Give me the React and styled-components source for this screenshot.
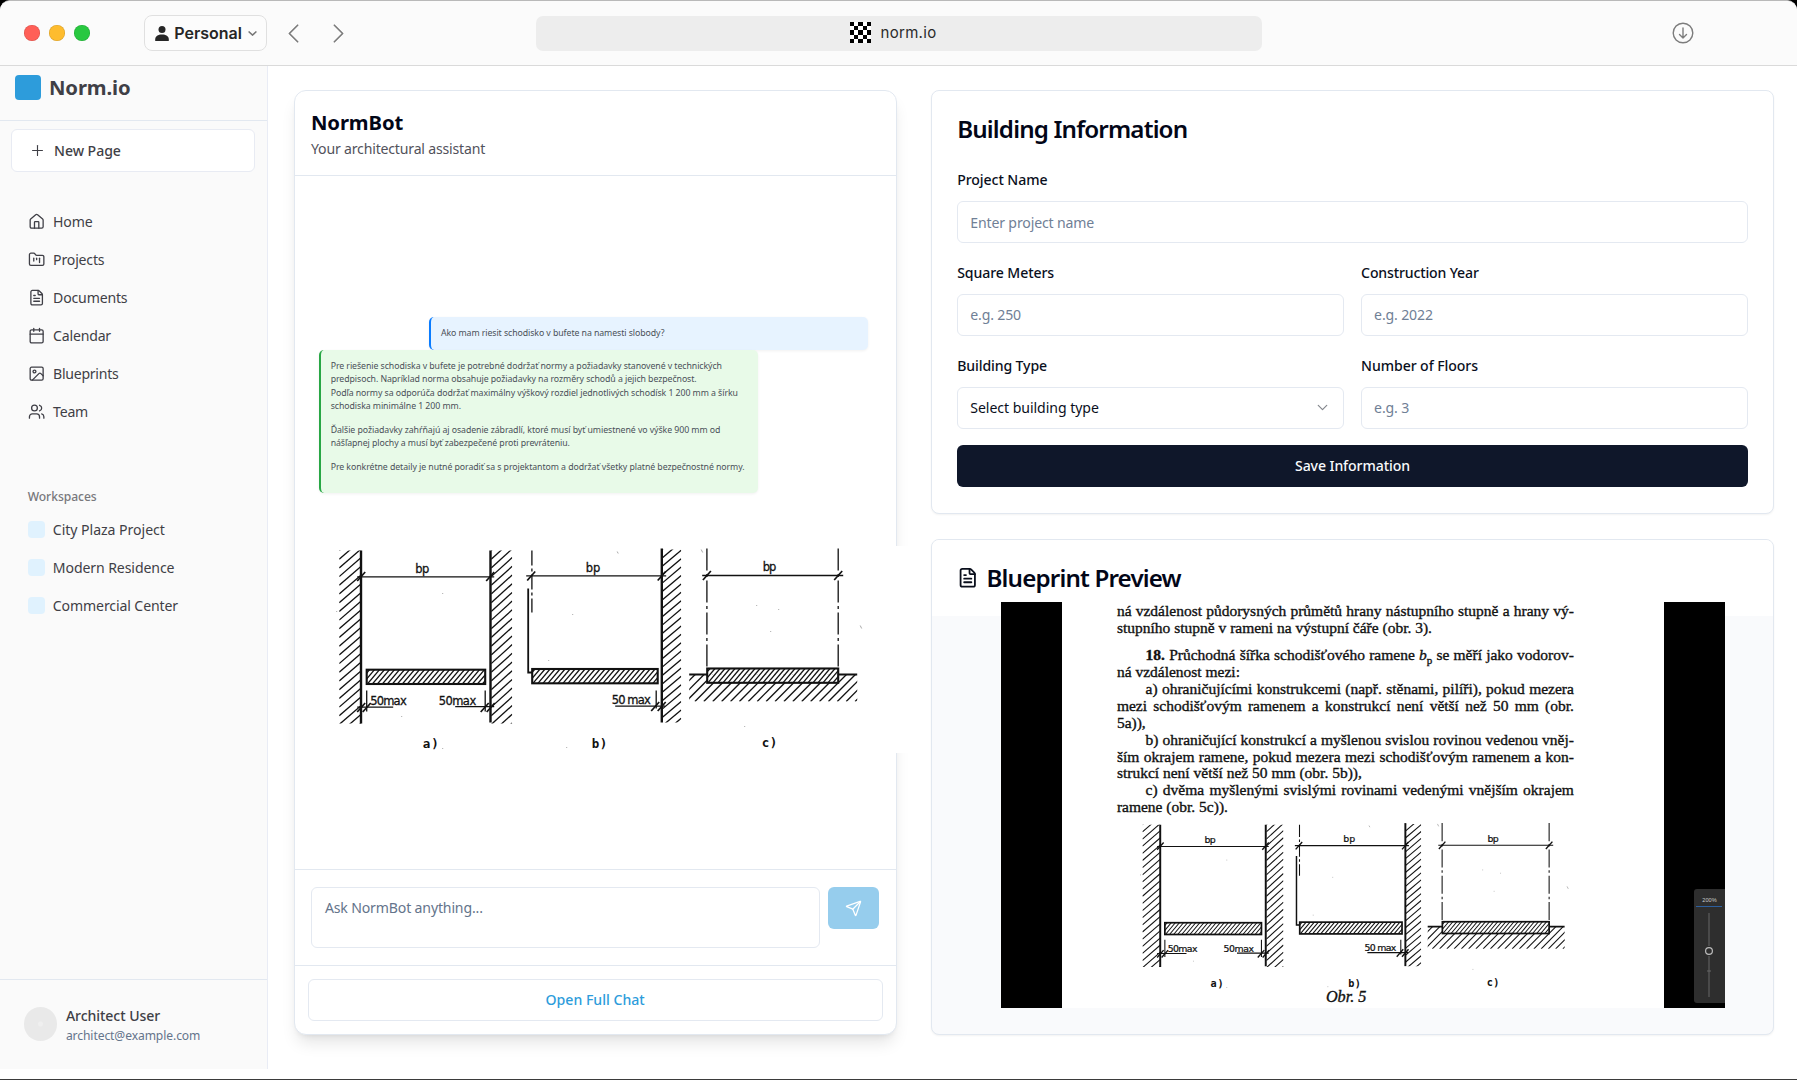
import React from "react";
import styled, { createGlobalStyle, css } from "styled-components";
import {
  House, FolderKanban, FileText, Calendar, Image, Users, Plus, Send,
  ChevronDown, ChevronLeft, ChevronRight,
} from "lucide-react";

const Global = createGlobalStyle`
  * { box-sizing: border-box; }
  body { margin: 0; background: #000; overflow: hidden; }
  button, input, textarea { font: inherit; color: inherit; }
`;

const line = "#e2e8f0";
const sans = css`font-family: "Noto Sans", "Open Sans", sans-serif;`;

const Window = styled.div`
  ${sans}
  width: 1797px;
  height: 1080px;
  display: flex;
  flex-direction: column;
  background: #fff;
  border-top: 1px solid #b9b9b9;
  border-bottom: 1px solid #3b3b3b;
  border-radius: 10px 10px 0 0;
  font-size: 14.1px;
  color: #0a0f1c;
  overflow: hidden;
`;

const Text = styled.span`
  letter-spacing: ${(p) => p.$ls || 0}px;
  white-space: nowrap;
`;

/* Browser toolbar */
const Toolbar = styled.header`
  height: 65px;
  flex: none;
  display: flex;
  align-items: center;
  background: #fbfbfb;
  border-bottom: 1px solid #dadada;
  font-family: Inter, sans-serif;
`;
const Lights = styled.div`
  display: flex;
  gap: 9.4px;
  margin-left: 24px;
`;
const Light = styled.i`
  width: 15.6px;
  height: 15.6px;
  border-radius: 50%;
  background: ${(p) => p.$color};
  box-shadow: inset 0 0 0 0.6px rgba(0, 0, 0, 0.14);
`;
const Profile = styled.button`
  width: 123px;
  height: 36px;
  margin-left: 54.2px;
  padding: 0 8px 0 10px;
  display: flex;
  align-items: center;
  border: 1px solid #e0e0e0;
  border-radius: 8px;
  background: #fcfcfc;
  font-size: 16px;
  font-weight: 600;
  color: #262626;
  svg { flex: none; }
  span { margin: 0 6.5px 0 5.5px; }
`;
const Arrows = styled.div`
  display: flex;
  gap: 12px;
  margin-left: 10.5px;
  color: #7b7b7b;
`;
const Address = styled.div`
  width: 726.5px;
  height: 35px;
  margin-left: 180.5px;
  padding: 0 12px 1.5px 0;
  display: flex;
  align-items: center;
  justify-content: center;
  gap: 10px;
  border-radius: 7px;
  background: #ededed;
  color: #2a2a2a;
  font-size: 15px;
`;
const Download = styled.svg`
  width: 22px;
  height: 22px;
  margin: 0 0 1px 410px;
  fill: none;
  stroke: #7d7d7d;
  stroke-width: 1.4;
  stroke-linecap: round;
  stroke-linejoin: round;
`;

/* Sidebar */
const Body = styled.div`
  flex: 1;
  display: flex;
  min-height: 0;
`;
const Sidebar = styled.aside`
  width: 268.4px;
  height: 1003px;
  flex: none;
  display: flex;
  flex-direction: column;
  background: #fafafa;
  border-right: 1px solid #e9ecf5;
  color: #3f3f46;
`;
const Brand = styled.div`
  height: 55px;
  padding: 8.6px 0 0 15px;
  display: flex;
  gap: 8.5px;
  border-bottom: 1px solid ${line};
  font-size: 20.3px;
  font-weight: 700;
  line-height: 25px;
`;
const Logo = styled.i`
  width: 25.5px;
  height: 25.5px;
  border-radius: 4px;
  background: #2d9cdb;
`;
const NewPage = styled.button`
  height: 42.5px;
  margin: 8px 12px 0 11px;
  padding: 0 0 0 17px;
  display: flex;
  align-items: center;
  gap: 8px;
  border: 1px solid #e8ebf3;
  border-radius: 6px;
  background: #fff;
  font-weight: 500;
`;
const Nav = styled.nav`
  margin-top: ${(p) => p.$top}px;
  display: flex;
  flex-direction: column;
`;
const NavItem = styled.a`
  height: 38px;
  padding-left: 27.7px;
  display: flex;
  align-items: center;
  gap: 8.1px;
`;
const Swatch = styled.i`
  width: 17px;
  height: 17px;
  border-radius: 4px;
  background: #e0f2fe;
`;
const NavLabel = styled.div`
  margin: 57px 0 0 27.7px;
  line-height: 18px;
  font-size: 12.1px;
  font-weight: 500;
  color: #78787c;
`;
const User = styled.footer`
  height: 90px;
  margin-top: auto;
  padding: 25px 0 0 23.5px;
  display: flex;
  gap: 8.9px;
  border-top: 1px solid ${line};
`;
const Avatar = styled.i`
  width: 33.5px;
  height: 33.5px;
  margin-top: 2px;
  border-radius: 50%;
  background: radial-gradient(circle, #efefef 0 2px, #e9e9e9 3px);
`;
const UserText = styled.div`
  display: flex;
  flex-direction: column;
  line-height: 22px;
  font-weight: 500;
  small {
    line-height: 17px;
    font-size: 12.1px;
    font-weight: 400;
    color: #64748b;
  }
`;

/* Main columns */
const Main = styled.main`
  flex: 1;
  padding: 24px 23.3px 0 26px;
  display: grid;
  grid-template-columns: 602.5px 842.5px;
  justify-content: space-between;
  align-items: start;
`;
const Chat = styled.section`
  height: 944.6px;
  display: flex;
  flex-direction: column;
  border: 1px solid ${line};
  border-radius: 12px;
  background: #fff;
  box-shadow: 0 11px 16px -3px rgba(0, 0, 0, 0.1), 0 4px 6px -4px rgba(0, 0, 0, 0.1);
`;
const ChatHeader = styled.div`
  height: 84.5px;
  padding: 17px 0 0 15.6px;
  border-bottom: 1px solid ${line};
  h2 {
    margin: 0;
    font-size: 20.3px;
    line-height: 28px;
    color: #020617;
  }
  p {
    margin: 1.5px 0 0;
    line-height: 21px;
    color: #52525b;
  }
`;
const Messages = styled.div`
  flex: 1;
  padding-top: 141px;
  font-size: 8.75px;
  line-height: 13.6px;
  color: #4a5058;
`;
const Bubble = styled.div`
  width: ${(p) => (p.$user ? 439.5 : 439)}px;
  height: ${(p) => (p.$user ? 33.3 : 143.4)}px;
  margin-left: ${(p) => (p.$user ? 133.6 : 23.4)}px;
  padding: ${(p) => (p.$user ? 10.8 : 9.9)}px 0 0 9.9px;
  border-left: 2.6px solid ${(p) => (p.$user ? "#0a7cff" : "#28a745")};
  border-radius: 5px;
  background: ${(p) => (p.$user ? "#e7f3ff" : "#e8fae8")};
  box-shadow: 0 1px 3px rgba(0, 0, 0, 0.06);
`;
const Paragraph = styled.div`
  display: flex;
  flex-direction: column;
  margin-bottom: 9.8px;
`;
const ChatFigure = styled.svg`
  position: relative;
  display: block;
  width: 592px;
  height: 206.5px;
  margin: 53px 0 0 23.2px;
  background: #fff;
`;
const Composer = styled.div`
  height: 96px;
  padding: 17px 16px;
  display: flex;
  align-items: flex-start;
  gap: 8.6px;
  border-top: 1px solid ${line};
`;
const Prompt = styled.div`
  width: 508.5px;
  height: 61px;
  padding: 8.4px 12.5px;
  border: 1px solid #e4e9f1;
  border-radius: 6px;
  line-height: 23px;
  color: #64748b;
`;
const SendButton = styled.button`
  width: 51px;
  height: 42.5px;
  padding: 0;
  display: flex;
  align-items: center;
  justify-content: center;
  border: 0;
  border-radius: 6px;
  background: #96cded;
  color: #fff;
`;
const ChatFooter = styled.div`
  padding: 13px 12.5px 12.3px;
  border-top: 1px solid ${line};
`;
const OpenChat = styled.button`
  width: 100%;
  height: 42.5px;
  padding: 0 1px 1px 0;
  border: 1px solid #e4e9f1;
  border-radius: 6px;
  background: #fff;
  font-weight: 500;
  color: #2d9cdb;
`;

/* Right column */
const Column = styled.div`
  display: flex;
  flex-direction: column;
  gap: 25.6px;
`;
const Card = styled.section`
  height: ${(p) => p.$h}px;
  border: 1px solid ${line};
  border-radius: 8px;
  background: ${(p) => p.$bg || "#fff"};
  box-shadow: 0 1px 2px rgba(0, 0, 0, 0.05);
`;
const Title = styled.h1`
  margin: 0;
  font-size: 24.2px;
  font-weight: 560;
  line-height: 34px;
  color: #020617;
`;
const Form = styled.form`
  padding: 21.2px 25px 0;
  display: flex;
  flex-direction: column;
`;
const FormGrid = styled.div`
  margin-top: 22.9px;
  display: grid;
  grid-template-columns: 1fr 1fr;
  column-gap: 17.3px;
  row-gap: 18.9px;
`;
const Field = styled.label`
  grid-column: ${(p) => (p.$wide ? "span 2" : "auto")};
  height: 74px;
  display: flex;
  flex-direction: column;
  justify-content: space-between;
  line-height: 21px;
  font-weight: 540;
`;
const Control = styled.div`
  height: 42px;
  padding: 0 12px;
  display: flex;
  align-items: center;
  justify-content: space-between;
  border: 1px solid #e4e9f1;
  border-radius: 6px;
  font-weight: 400;
  color: ${(p) => (p.$filled ? "#0a0f1c" : "#708096")};
  svg { color: #84878d; }
`;
const Save = styled.button`
  height: 42px;
  margin-top: 16.6px;
  padding: 0 0 1px;
  border: 0;
  border-radius: 6px;
  background: #0f172a;
  color: #f8fafc;
  font-weight: 500;
`;
const PreviewHeader = styled.div`
  height: 76px;
  padding: 21.4px 0 0 25px;
  display: flex;
  gap: 7.8px;
  border-radius: 7px 7px 0 0;
  background: #fff;
  svg { margin-top: 5.4px; }
`;
const Scan = styled.div`
  position: relative;
  width: 724.5px;
  height: 406.5px;
  margin: -14.4px 0 0 68.5px;
  display: flex;
  background: #000;
`;
const Margin = styled.div`
  width: 61.2px;
  display: flex;
  flex-direction: column;
  align-items: flex-end;
  justify-content: flex-end;
  padding-bottom: 5px;
`;
const Paper = styled.div`
  flex: 1;
  padding-top: 1.2px;
  background: #fff;
  font-family: "Liberation Serif", "Times New Roman", serif;
  font-size: 15.5px;
  line-height: 16.9px;
  color: #111;
  -webkit-text-stroke: 0.35px #111;
`;
const ScanLine = styled.div`
  width: 457px;
  margin: ${(p) => p.$gap || 0}px 0 0 55px;
  padding-left: ${(p) => (p.$indent ? 28.7 : 0)}px;
  white-space: nowrap;
  text-align-last: ${(p) => (p.$short ? "left" : "justify")};
  sub { font-size: 11px; line-height: 0; }
`;
const ScanFigure = styled.svg`
  display: block;
  width: 100%;
  height: 169.3px;
  margin-top: 3px;
  overflow: visible;
  -webkit-text-stroke: 0;
`;
const ScanCaption = styled.div`
  padding: 1.6px 0 0 264px;
  line-height: 15px;
  font-size: 16.2px;
  font-style: italic;
`;
const ZoomPanel = styled.div`
  width: 31.5px;
  height: 114px;
  padding-top: 7px;
  display: flex;
  flex-direction: column;
  align-items: center;
  border-radius: 3px 0 0 3px;
  background: #2e2e2e;
  color: #c9c9c9;
  font-family: "Liberation Sans", sans-serif;
  font-size: 5.6px;
  line-height: 8px;
`;

/* Section drawing */
const Ink = styled.g`
  stroke: #111;
  stroke-width: 1.3;
  fill: none;
  text {
    fill: #111;
    stroke: #111;
    stroke-width: 0.3;
    font-family: "DejaVu Sans", sans-serif;
    font-size: 11.5px;
  }
  .tag {
    font-family: "DejaVu Sans Mono", monospace;
    font-weight: 700;
    font-size: 12.5px;
    stroke-width: 0;
  }
`;

function Hatch({ x, y, w, h, step, rise }) {
  const lines = [];
  for (let s = 0; s < h + rise + step; s += step) lines.push(s);
  return (
    <svg x={x} y={y} width={w} height={h}>
      {lines.map((s) => (
        <line key={s} x1={0} y1={s} x2={w} y2={s - rise} />
      ))}
    </svg>
  );
}

function Slab({ x, y, w, h = 14.3 }) {
  const lines = [];
  for (let s = -h; s < w; s += 5) lines.push(s);
  return (
    <>
      <svg x={x} y={y} width={w} height={h}>
        {lines.map((s) => (
          <line key={s} x1={s} y1={h} x2={s + h * 0.85} y2={0} strokeWidth="1.3" />
        ))}
      </svg>
      <rect x={x} y={y} width={w} height={h} strokeWidth="2.1" />
    </>
  );
}

function Ground() {
  const lines = [];
  for (let s = 668; s < 860; s += 8.9) lines.push(s);
  return (
    <svg x="689" y="676" width="168" height="27" viewBox="689 676 168 27">
      {lines.map((s) => (
        <line key={s} x1={s} y1={703} x2={s + 27} y2={676} />
      ))}
      <rect x="707" y="670" width="131" height="14.3" fill="#fff" stroke="none" />
    </svg>
  );
}

const Tick = ({ x, y }) => <path strokeWidth="1.7" d={`M${x - 4} ${y + 4.5}l8-9`} />;

function SectionDrawing() {
  return (
    <Ink>
      <Hatch x={339} y={552} w={22} h={173} step={8.7} rise={19} />
      <Hatch x={491} y={552} w={21} h={173} step={8.7} rise={19} />
      <path strokeWidth="2.4" d="M360.8 552V725M490.3 552V724" />
      <path d="M357 578.4H494" />
      <Tick x={361} y={578} /><Tick x={490} y={578} />
      <text x="415" y="574" textLength="14">bp</text>
      <Slab x={366.5} y={671.2} w={118.5} />
      <path d="M366.5 692V713M485 692V713M357 708.6H393M455 708.2H494" />
      <Tick x={361} y={709} /><Tick x={366.5} y={709} /><Tick x={484.5} y={709} /><Tick x={490.5} y={709} />
      <text x="370" y="706.5" textLength="36.5">50max</text>
      <text x="438.5" y="706.5" textLength="37.5">50max</text>
      <text className="tag" x="422.5" y="749.5" textLength="16">a)</text>

      <path strokeDasharray="15 3 3 3" d="M531.7 552V614" />
      <path strokeWidth="1.8" d="M528 590V674H532" />
      <path d="M526 577.4H666" />
      <Tick x={531} y={577.5} /><Tick x={661.5} y={577.5} />
      <text x="585.5" y="573.5" textLength="14.5">bp</text>
      <Slab x={532} y={670.5} w={125.5} />
      <Hatch x={662} y={551} w={19} h={173} step={8.4} rise={16} />
      <path strokeWidth="2.4" d="M661.6 550V724" />
      <path d="M656 692V710M615 707.6H665" />
      <Tick x={655} y={708} /><Tick x={661.5} y={708} />
      <text x="611.5" y="705" textLength="39">50 max</text>
      <text className="tag" x="591.5" y="749" textLength="15.5">b)</text>

      <path strokeDasharray="22 3.5 3 3.5" d="M706.7 550V670M838 550V670" />
      <path d="M702 577H843" />
      <Tick x={706.7} y={577} /><Tick x={838} y={577} />
      <text x="762.5" y="572.5" textLength="13.5">bp</text>
      <Ground />
      <Slab x={707} y={670} w={131} />
      <path strokeWidth="2" d="M689 676H707M838 676H857" />
      <text className="tag" x="761.5" y="748.5" textLength="15.5">c)</text>

      <path stroke="#aaa" strokeWidth="1" d="M336 613h1M442 595h1M401 718h1M442 750h1M566 749h1M617 553l1 2M701 551l1.5 3M744 728h1M860 627l1.5 3M770 633h1M756 607h1M778 611h1M548 662h1M572 616h1" />
    </Ink>
  );
}

const navItems = [
  [House, "Home", -0.2], [FolderKanban, "Projects", -0.18], [FileText, "Documents", -0.18],
  [Calendar, "Calendar", -0.2], [Image, "Blueprints", -0.28], [Users, "Team", -0.25],
];
const workspaces = [["City Plaza Project", -0.04], ["Modern Residence", -0.1], ["Commercial Center", -0.12]];
const answer = [
  [
    "Pre riešenie schodiska v bufete je potrebné dodržať normy a požiadavky stanovené v technických",
    "predpisoch. Napríklad norma obsahuje požiadavky na rozměry schodů a jejich bezpečnost.",
    "Podľa normy sa odporúča dodržať maximálny výškový rozdiel jednotlivých schodísk 1 200 mm a šírku",
    "schodiska minimálne 1 200 mm.",
  ],
  [
    "Ďalšie požiadavky zahŕňajú aj osadenie zábradlí, ktoré musí byť umiestnené vo výške 900 mm od",
    "nášľapnej plochy a musí byť zabezpečené proti prevráteniu.",
  ],
  ["Pre konkrétne detaily je nutné poradiť sa s projektantom a dodržať všetky platné bezpečnostné normy."],
];

function Checker() {
  const cells = [];
  for (let r = 0; r < 5; r++)
    for (let c = 0; c < 5; c++)
      if ((r + c) % 2 === 0) cells.push(<rect key={`${r}${c}`} x={c * 4.2} y={r * 4.2} width="4.2" height="4.2" />);
  return (
    <svg width="21" height="21" shapeRendering="crispEdges">
      <rect width="21" height="21" fill="#fff" />
      {cells}
    </svg>
  );
}

export default function App() {
  return (
    <>
      <Global />
      <Window>
        <Toolbar>
          <Lights>
            <Light $color="#ff5f57" /><Light $color="#febc2e" /><Light $color="#28c840" />
          </Lights>
          <Profile>
            <svg width="14" height="15" viewBox="0 0 14 15" fill="#262626">
              <circle cx="7" cy="3.6" r="3.5" />
              <path d="M0.2 15v-1.6C0.2 10.4 3 8.6 7 8.6s6.8 1.8 6.8 4.8V15z" />
            </svg>
            <Text>Personal</Text>
            <svg width="9" height="5" viewBox="0 0 9 5" fill="none" stroke="#777" strokeWidth="1.5"><path d="M.6.5l3.9 3.6L8.4.5" /></svg>
          </Profile>
          <Arrows>
            <ChevronLeft size={33} strokeWidth={1.25} />
            <ChevronRight size={33} strokeWidth={1.25} />
          </Arrows>
          <Address><Checker /><Text $ls={0.3}>norm.io</Text></Address>
          <Download viewBox="0 0 22 22">
            <circle cx="11" cy="11" r="9.8" />
            <path d="M11 6v10M7.5 12.5L11 16l3.5-3.5" />
          </Download>
        </Toolbar>
        <Body>
          <Sidebar>
            <Brand><Logo /><Text $ls={-0.12}>Norm.io</Text></Brand>
            <NewPage><Plus size={17} strokeWidth={1.6} /><Text $ls={-0.05}>New Page</Text></NewPage>
            <Nav $top={31}>
              {navItems.map(([Icon, label, ls]) => (
                <NavItem key={label}><Icon size={17.3} strokeWidth={1.8} /><Text $ls={ls}>{label}</Text></NavItem>
              ))}
            </Nav>
            <NavLabel><Text $ls={-0.05}>Workspaces</Text></NavLabel>
            <Nav $top={5}>
              {workspaces.map(([label, ls]) => (
                <NavItem key={label}><Swatch /><Text $ls={ls}>{label}</Text></NavItem>
              ))}
            </Nav>
            <User>
              <Avatar />
              <UserText>
                <Text $ls={-0.07}>Architect User</Text>
                <small><Text $ls={-0.09}>architect@example.com</Text></small>
              </UserText>
            </User>
          </Sidebar>
          <Main>
            <Chat>
              <ChatHeader>
                <h2><Text $ls={-0.12}>NormBot</Text></h2>
                <p><Text $ls={-0.19}>Your architectural assistant</Text></p>
              </ChatHeader>
              <Messages>
                <Bubble $user><Text $ls={-0.07}>Ako mam riesit schodisko v bufete na namesti slobody?</Text></Bubble>
                <Bubble>
                  {answer.map((lines, i) => (
                    <Paragraph key={i}>
                      {lines.map((t) => <Text key={t} $ls={-0.065}>{t}</Text>)}
                    </Paragraph>
                  ))}
                </Bubble>
                <ChatFigure viewBox="318.8 547.5 592 206.5"><SectionDrawing /></ChatFigure>
              </Messages>
              <Composer>
                <Prompt><Text $ls={-0.16}>Ask NormBot anything...</Text></Prompt>
                <SendButton><Send size={17} strokeWidth={1.8} /></SendButton>
              </Composer>
              <ChatFooter><OpenChat><Text>Open Full Chat</Text></OpenChat></ChatFooter>
            </Chat>
            <Column>
              <Card $h={423.5}>
                <Form>
                  <Title><Text $ls={-0.85}>Building Information</Text></Title>
                  <FormGrid>
                    <Field $wide><Text $ls={-0.08}>Project Name</Text><Control><Text $ls={-0.15}>Enter project name</Text></Control></Field>
                    <Field><Text $ls={-0.1}>Square Meters</Text><Control><Text $ls={-0.15}>e.g. 250</Text></Control></Field>
                    <Field><Text $ls={-0.16}>Construction Year</Text><Control><Text $ls={-0.15}>e.g. 2022</Text></Control></Field>
                    <Field><Text $ls={-0.12}>Building Type</Text><Control $filled><Text $ls={-0.05}>Select building type</Text><ChevronDown size={17} strokeWidth={1.7} /></Control></Field>
                    <Field><Text $ls={-0.08}>Number of Floors</Text><Control><Text $ls={-0.15}>e.g. 3</Text></Control></Field>
                  </FormGrid>
                  <Save type="button"><Text $ls={-0.1}>Save Information</Text></Save>
                </Form>
              </Card>
              <Card $h={496} $bg="#f9fafc">
                <PreviewHeader>
                  <FileText size={21.5} strokeWidth={2} />
                  <Title><Text $ls={-0.85}>Blueprint Preview</Text></Title>
                </PreviewHeader>
                <Scan>
                  <Margin />
                  <Paper>
                    <ScanLine>ná vzdálenost půdorysných průmětů hrany nástupního stupně a hrany vý-</ScanLine>
                    <ScanLine $short>stupního stupně v rameni na výstupní čáře (obr. 3).</ScanLine>
                    <ScanLine $gap={10.4} $indent><b>18.</b> Průchodná šířka schodišťového ramene <i>b</i><sub>p</sub> se měří jako vodorov-</ScanLine>
                    <ScanLine $short>ná vzdálenost mezi:</ScanLine>
                    <ScanLine $indent>a) ohraničujícími konstrukcemi (např. stěnami, pilíři), pokud mezera</ScanLine>
                    <ScanLine>mezi schodišťovým ramenem a konstrukcí není větší než 50 mm (obr.</ScanLine>
                    <ScanLine $short>5a)),</ScanLine>
                    <ScanLine $indent>b) ohraničující konstrukcí a myšlenou svislou rovinou vedenou vněj-</ScanLine>
                    <ScanLine>ším okrajem ramene, pokud mezera mezi schodišťovým ramenem a kon-</ScanLine>
                    <ScanLine $short>strukcí není větší než 50 mm (obr. 5b)),</ScanLine>
                    <ScanLine $indent>c) dvěma myšlenými svislými rovinami vedenými vnějším okrajem</ScanLine>
                    <ScanLine $short>ramene (obr. 5c)).</ScanLine>
                    <ScanFigure viewBox="1062 820 602 169.3">
                      <g transform="translate(866.1 372) scale(.815 .822)"><SectionDrawing /></g>
                    </ScanFigure>
                    <ScanCaption>Obr. 5</ScanCaption>
                  </Paper>
                  <Margin>
                    <ZoomPanel>
                      200%
                      <svg width="26" height="96" fill="none" stroke="#666">
                        <path d="M0 2.5H26" stroke="#2d5f9e" />
                        <path d="M13 9V42M13 52V93M11 67H15" />
                        <circle cx="13" cy="47" r="3.4" stroke="#bbb" strokeWidth="1.2" />
                      </svg>
                    </ZoomPanel>
                  </Margin>
                </Scan>
              </Card>
            </Column>
          </Main>
        </Body>
      </Window>
    </>
  );
}
